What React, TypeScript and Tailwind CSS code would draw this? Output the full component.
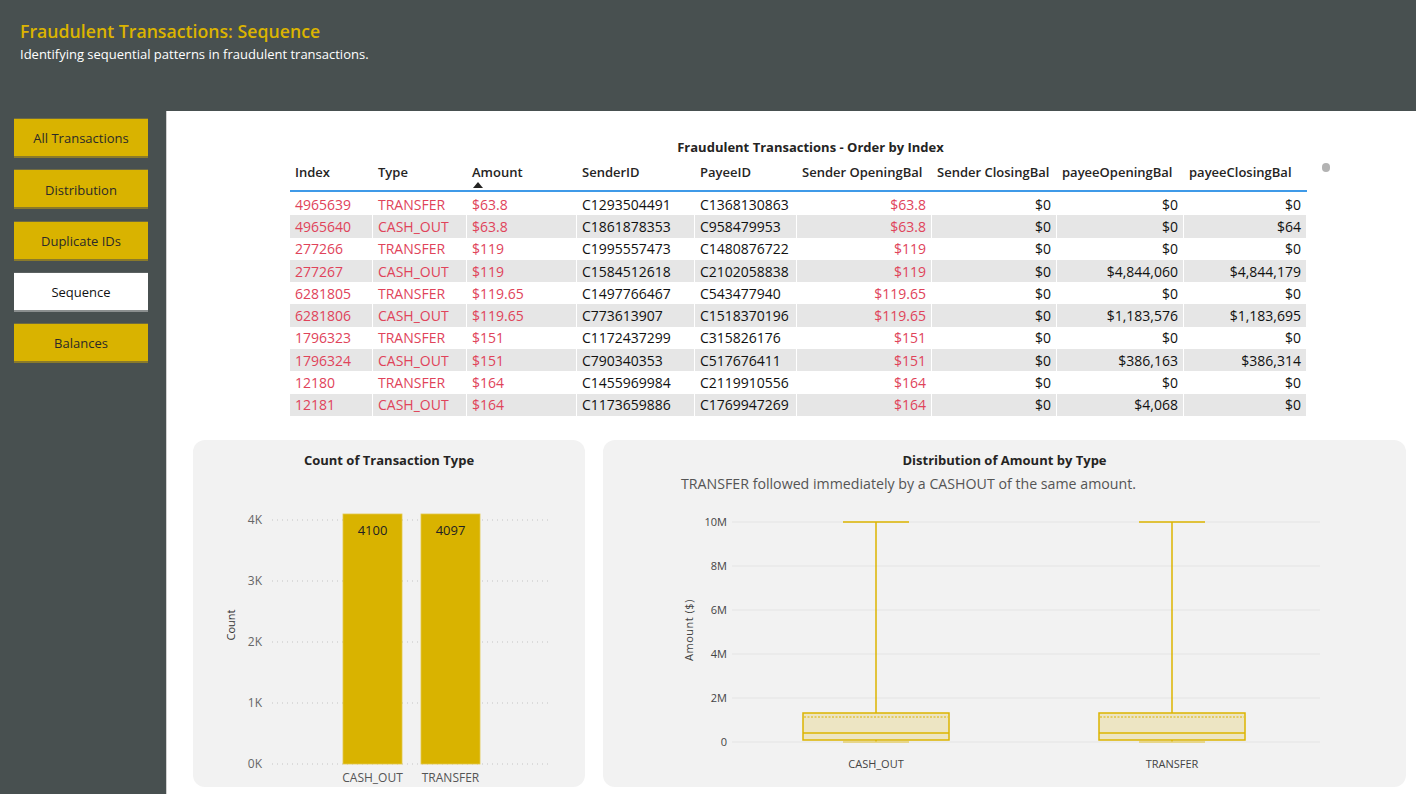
const FONT = { fontFamily: '"Open Sans", "Noto Sans", sans-serif' };

const NAV = ['All Transactions', 'Distribution', 'Duplicate IDs', 'Sequence', 'Balances'];

type Row = string[];
const ROWS: Row[] = [
  ['4965639', 'TRANSFER', '$63.8', 'C1293504491', 'C1368130863', '$63.8', '$0', '$0', '$0'],
  ['4965640', 'CASH_OUT', '$63.8', 'C1861878353', 'C958479953', '$63.8', '$0', '$0', '$64'],
  ['277266', 'TRANSFER', '$119', 'C1995557473', 'C1480876722', '$119', '$0', '$0', '$0'],
  ['277267', 'CASH_OUT', '$119', 'C1584512618', 'C2102058838', '$119', '$0', '$4,844,060', '$4,844,179'],
  ['6281805', 'TRANSFER', '$119.65', 'C1497766467', 'C543477940', '$119.65', '$0', '$0', '$0'],
  ['6281806', 'CASH_OUT', '$119.65', 'C773613907', 'C1518370196', '$119.65', '$0', '$1,183,576', '$1,183,695'],
  ['1796323', 'TRANSFER', '$151', 'C1172437299', 'C315826176', '$151', '$0', '$0', '$0'],
  ['1796324', 'CASH_OUT', '$151', 'C790340353', 'C517676411', '$151', '$0', '$386,163', '$386,314'],
  ['12180', 'TRANSFER', '$164', 'C1455969984', 'C2119910556', '$164', '$0', '$0', '$0'],
  ['12181', 'CASH_OUT', '$164', 'C1173659886', 'C1769947269', '$164', '$0', '$4,068', '$0'],
];

const COLS = [
  { name: 'Index', w: 'w-[83px]', right: false, red: true },
  { name: 'Type', w: 'w-[94px]', right: false, red: true },
  { name: 'Amount', w: 'w-[110px]', right: false, red: true },
  { name: 'SenderID', w: 'w-[118px]', right: false, red: false },
  { name: 'PayeeID', w: 'w-[102px]', right: false, red: false },
  { name: 'Sender OpeningBal', w: 'w-[135px]', right: true, red: true },
  { name: 'Sender ClosingBal', w: 'w-[125px]', right: true, red: false },
  { name: 'payeeOpeningBal', w: 'w-[127px]', right: true, red: false },
  { name: 'payeeClosingBal', w: 'w-[123px]', right: true, red: false },
];

function NavButton({ label, active }: { label: string; active: boolean }) {
  return (
    <div
      className={
        'h-[40px] w-[134px] flex items-center justify-center pt-[3px] text-[13px] border-t border-b-2 ' +
        (active
          ? 'bg-white text-[#111] border-t-[#5b6161] border-b-[#8b8f8f]'
          : 'bg-[#d9b300] text-[#2b2a28] border-t-[#6f6a40] border-b-[#8a7a2a]')
      }
    >
      {label}
    </div>
  );
}

function FraudTable() {
  return (
    <div className="ml-[123px] w-[1041px] pt-[27px]">
      <div className="text-center text-[13px] font-bold leading-[18px] text-[#252423]">
        Fraudulent Transactions - Order by Index
      </div>
      <div className="flex">
        <div className="w-[1017px]">
          <div className="flex h-[31px] border-b-2 border-[#3f9ae8] mt-[5px]">
            {COLS.map(c => (
              <div key={c.name} className={c.w + ' px-[5px] pt-[2px] text-[13px] font-semibold leading-[18px] text-[#252423] relative'}>
                {c.name}
                {c.name === 'Amount' && (
                  <svg className="absolute left-[6px] top-[21px]" width="10" height="6" viewBox="0 0 10 6">
                    <path d="M0 6 L5 0 L10 6 Z" fill="#252423" />
                  </svg>
                )}
              </div>
            ))}
          </div>
          <div className="pt-[1px]">
            {ROWS.map((r, i) => (
              <div key={i} className={'flex h-[22.3px] items-center ' + (i % 2 === 1 ? 'bg-[#e6e6e6]' : 'bg-white')}>
                {r.map((v, j) => {
                  const c = COLS[j];
                  return (
                    <div
                      key={j}
                      className={
                        c.w + ' h-full flex items-center px-[5px] text-[14px] border-r border-white ' +
                        (c.right ? 'justify-end ' : '') +
                        (c.red ? 'text-[#e0435a]' : 'text-[#111]')
                      }
                    >
                      {v}
                    </div>
                  );
                })}
              </div>
            ))}
          </div>
        </div>
        <div className="flex-1 pl-[15px] pt-[7px]">
          <div className="w-[8px] h-[9px] rounded-full bg-[#b3b3b3]" />
        </div>
      </div>
    </div>
  );
}

function CountChart() {
  const ticks = [
    { l: '4K', y: 51 },
    { l: '3K', y: 112 },
    { l: '2K', y: 173 },
    { l: '1K', y: 234 },
    { l: '0K', y: 295 },
  ];
  return (
    <div className="w-[392px] h-[347px] rounded-[12px] bg-[#f2f2f2] flex flex-col">
      <div className="pt-[11px] text-center text-[13px] font-bold leading-[18px] text-[#252423]">
        Count of Transaction Type
      </div>
      <svg width="392" height="318" className="block">
        {ticks.map(t => (
          <g key={t.l}>
            <line x1="79" x2="359" y1={t.y} y2={t.y} stroke="#c4c4c4" strokeWidth="1" strokeDasharray="1 4" />
            <text x="69" y={t.y + 4} textAnchor="end" fontSize="12" fill="#666">{t.l}</text>
          </g>
        ))}
        <rect x="150" y="45" width="59" height="250" fill="#d9b300" stroke="#e3c84a" strokeWidth="0.8" />
        <rect x="228" y="45" width="59" height="250" fill="#d9b300" stroke="#e3c84a" strokeWidth="0.8" />
        <text x="179.5" y="66" textAnchor="middle" fontSize="13" fill="#222">4100</text>
        <text x="257.5" y="66" textAnchor="middle" fontSize="13" fill="#222">4097</text>
        <text x="179.5" y="313" textAnchor="middle" fontSize="12" fill="#555">CASH_OUT</text>
        <text x="257.5" y="313" textAnchor="middle" fontSize="12" fill="#555">TRANSFER</text>
        <text x="42" y="156" textAnchor="middle" fontSize="11" fill="#333" transform="rotate(-90 42 156)">Count</text>
      </svg>
    </div>
  );
}

function BoxPlot({ cx, label }: { cx: number; label: string }) {
  return (
    <g>
      <line x1={cx - 33} x2={cx + 33} y1="29" y2="29" stroke="#dcb400" strokeWidth="1.5" />
      <line x1={cx} x2={cx} y1="29" y2="220" stroke="#dcb400" strokeWidth="1.5" />
      <rect x={cx - 73} y="220" width="146" height="27" fill="#ede5c3" stroke="#dcb400" strokeWidth="1.5" />
      <line x1={cx - 72} x2={cx + 72} y1="224" y2="224" stroke="#dcb400" strokeWidth="1" strokeDasharray="2 1.5" />
      <line x1={cx - 73} x2={cx + 73} y1="240" y2="240" stroke="#dcb400" strokeWidth="1.5" />
      <line x1={cx} x2={cx} y1="247" y2="249" stroke="#dcb400" strokeWidth="1.5" />
      <line x1={cx - 33} x2={cx + 33} y1="249" y2="249" stroke="#e6cf6a" strokeWidth="1.5" />
      <text x={cx} y="275" textAnchor="middle" fontSize="11" fill="#444">{label}</text>
    </g>
  );
}

function DistChart() {
  const ticks = [
    { l: '10M', y: 29 },
    { l: '8M', y: 73 },
    { l: '6M', y: 117 },
    { l: '4M', y: 161 },
    { l: '2M', y: 205 },
    { l: '0', y: 249 },
  ];
  return (
    <div className="w-[803px] h-[347px] rounded-[12px] bg-[#f2f2f2] flex flex-col">
      <div className="pt-[11px] text-center text-[13px] font-bold leading-[18px] text-[#252423]">
        Distribution of Amount by Type
      </div>
      <div className="mt-[6px] pl-[78px] text-[14.2px] leading-[18px] text-[#555]">
        TRANSFER followed immediately by a CASHOUT of the same amount.
      </div>
      <svg width="803" height="294" className="block">
        {ticks.map(t => (
          <g key={t.l}>
            <line x1="129" x2="717" y1={t.y} y2={t.y} stroke="#e4e4e4" strokeWidth="1" />
            <text x="124" y={t.y + 4} textAnchor="end" fontSize="11" fill="#444">{t.l}</text>
          </g>
        ))}
        <BoxPlot cx={273} label="CASH_OUT" />
        <BoxPlot cx={569} label="TRANSFER" />
        <text x="90" y="137" textAnchor="middle" fontSize="11" fill="#444" letterSpacing="0.5" transform="rotate(-90 90 137)">Amount ($)</text>
      </svg>
    </div>
  );
}

export default function App() {
  return (
    <div className="w-[1416px] h-[794px] overflow-hidden bg-[#485050] flex flex-col" style={FONT}>
      <div className="h-[111px] pl-[20px] pt-[19px]">
        <div className="text-[17.7px] font-semibold leading-[24px] text-[#dcb400]">Fraudulent Transactions: Sequence</div>
        <div className="text-[13px] leading-[18px] text-white mt-[2px]">Identifying sequential patterns in fraudulent transactions.</div>
      </div>
      <div className="flex flex-1">
        <div className="w-[166px] pl-[14px] pt-[7px] flex flex-col gap-[11.3px]">
          {NAV.map(n => (
            <NavButton key={n} label={n} active={n === 'Sequence'} />
          ))}
        </div>
        <div className="flex-1 bg-white border-l border-[#d0d0d0]">
          <FraudTable />
          <div className="flex gap-[18px] ml-[26px] mt-[24px]">
            <CountChart />
            <DistChart />
          </div>
        </div>
      </div>
    </div>
  );
}
